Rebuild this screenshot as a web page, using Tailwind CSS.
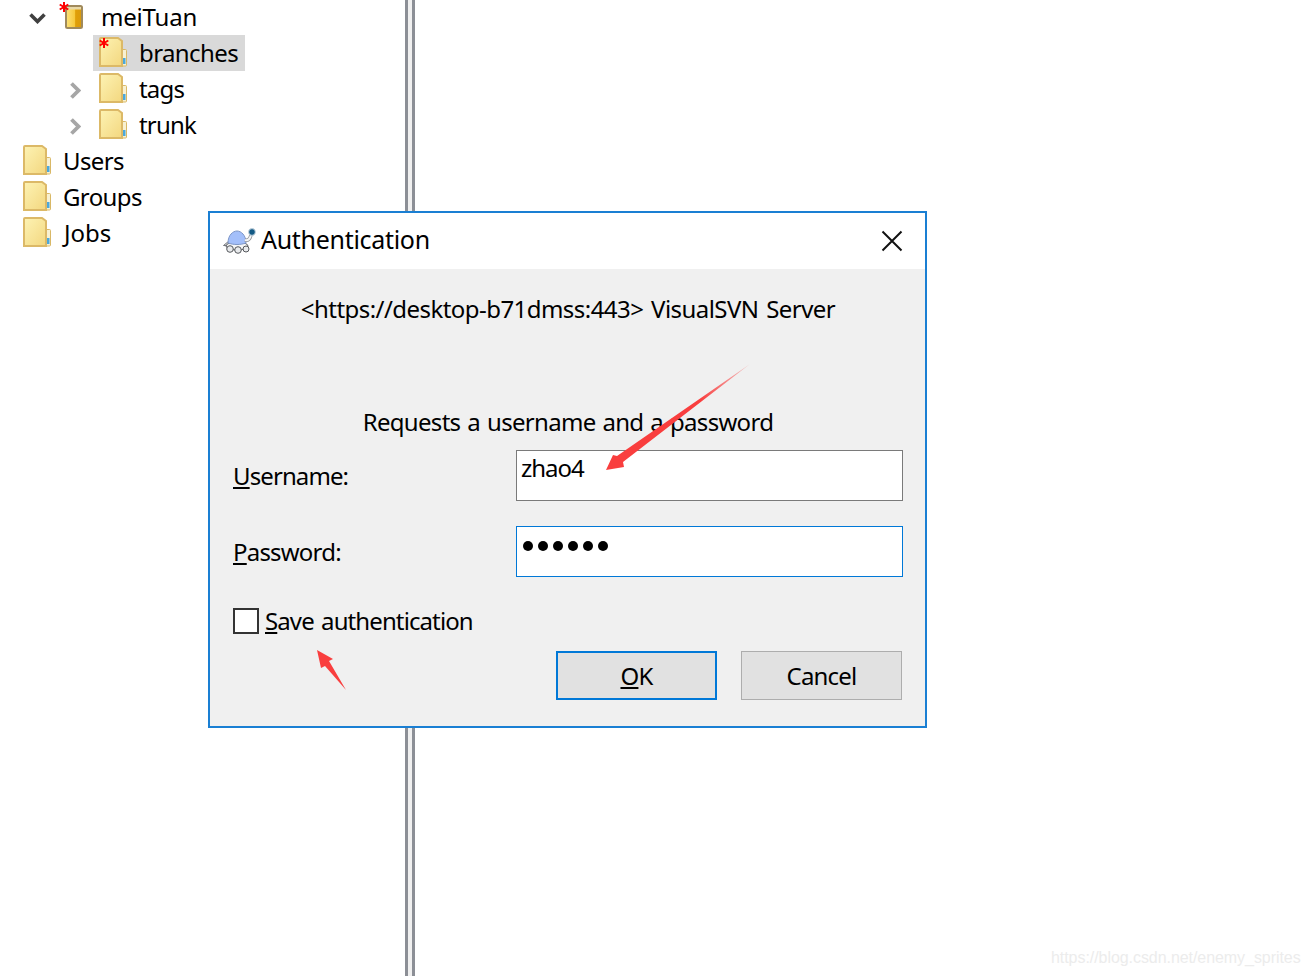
<!DOCTYPE html>
<html lang="en">
<head>
    <meta charset="UTF-8">
    <meta name="viewport" content="width=device-width, initial-scale=1.0">
    <title>Authentication</title>
    <script src="https://cdn.jsdelivr.net/npm/@tailwindcss/browser@4"></script>
</head>
<body class="bg-white text-black font-['Noto_Sans','Open_Sans',sans-serif] text-[24px] tracking-[-0.5px] overflow-hidden">

    <!-- shared icons -->
    <svg class="absolute w-0 h-0">
        <defs>
            <linearGradient id="folder-fill" x1="0" y1="0" x2="1" y2="1">
                <stop offset="0" stop-color="#fdf3b4"/>
                <stop offset="1" stop-color="#f3d77f"/>
            </linearGradient>
            <linearGradient id="repo-fill" x1="0" y1="0" x2="1" y2="0">
                <stop offset="0" stop-color="#fde27a"/>
                <stop offset="0.55" stop-color="#f7c93c"/>
                <stop offset="0.6" stop-color="#e09f08"/>
                <stop offset="1" stop-color="#d99a0c"/>
            </linearGradient>
            <linearGradient id="arrow-fade" gradientUnits="userSpaceOnUse" x1="750" y1="364" x2="700" y2="401">
                <stop offset="0" stop-color="#f93e3e" stop-opacity="0.25"/>
                <stop offset="1" stop-color="#f93e3e"/>
            </linearGradient>
            <symbol id="folder" viewBox="0 0 28 30">
                <path d="M22.5 12.5h4a1 1 0 0 1 1 1V28a1 1 0 0 1-1 1h-4z" fill="#f8f1d2" stroke="#d9b866"/>
                <rect x="24" y="21" width="2.5" height="6" fill="#4aa8dc"/>
                <path d="M1 2a1 1 0 0 1 1-1h17l4 3v25H1z" fill="url(#folder-fill)" stroke="#dcb967" stroke-width="2"/>
            </symbol>
            <symbol id="star" viewBox="0 0 10 10">
                <path d="M5 0v10M0.7 2.5l8.6 5M9.3 2.5l-8.6 5" stroke="#ff0000" stroke-width="2"/>
            </symbol>
        </defs>
    </svg>

    <!-- repository tree -->
    <div class="-mt-px w-[405px]">
        <div class="flex items-center h-9 pl-[29px]">
            <svg class="w-[17px] h-[11px] mr-[13px] mt-[3px]" viewBox="0 0 17 11" fill="none"><path d="M1.5 1.5l7 7 7-7" stroke="#404040" stroke-width="3.6"/></svg>
            <span class="relative w-[28px] h-[36px] flex items-center">
                <svg class="absolute left-0 top-[3px] w-[10px] h-[10px] z-10"><use href="#star"/></svg>
                <svg class="ml-[6px] w-[18px] h-[24px]" viewBox="0 0 18 24">
                    <rect x="1" y="1" width="16" height="22" rx="1.5" fill="url(#repo-fill)" stroke="#a08a5c" stroke-width="2"/>
                    <rect x="2" y="2" width="14" height="2.5" fill="#e9d9a8"/>
                </svg>
            </span>
            <span class="ml-[14px] tracking-[-0.2px]">meiTuan</span>
        </div>
        <div class="flex items-center h-9 pl-[93px]">
            <div class="flex items-center h-9 w-[152px] pl-[6px] bg-[#d9d9d9]">
                <span class="relative w-[28px] h-[30px] -mt-0.5">
                    <svg class="block w-[28px] h-[30px]"><use href="#folder"/></svg>
                    <svg class="absolute left-0 top-[1px] w-[10px] h-[10px]"><use href="#star"/></svg>
                </span>
                <span class="ml-[12px] tracking-[-0.6px]">branches</span>
            </div>
        </div>
        <div class="flex items-center h-9 pl-[70px]">
            <svg class="w-[11px] h-[17px] mr-[18px] mt-[2px]" viewBox="0 0 11 17" fill="none"><path d="M1.5 1.5l7 7-7 7" stroke="#a6a6a6" stroke-width="3.8"/></svg>
            <svg class="w-[28px] h-[30px] -mt-0.5"><use href="#folder"/></svg>
            <span class="ml-[12px] tracking-[-0.8px]">tags</span>
        </div>
        <div class="flex items-center h-9 pl-[70px]">
            <svg class="w-[11px] h-[17px] mr-[18px] mt-[2px]" viewBox="0 0 11 17" fill="none"><path d="M1.5 1.5l7 7-7 7" stroke="#a6a6a6" stroke-width="3.8"/></svg>
            <svg class="w-[28px] h-[30px] -mt-0.5"><use href="#folder"/></svg>
            <span class="ml-[12px] tracking-[-0.8px]">trunk</span>
        </div>
        <div class="flex items-center h-9 pl-[23px]">
            <svg class="w-[28px] h-[30px] -mt-0.5"><use href="#folder"/></svg>
            <span class="ml-[12px] tracking-[-0.6px]">Users</span>
        </div>
        <div class="flex items-center h-9 pl-[23px]">
            <svg class="w-[28px] h-[30px] -mt-0.5"><use href="#folder"/></svg>
            <span class="ml-[12px] tracking-[-0.6px]">Groups</span>
        </div>
        <div class="flex items-center h-9 pl-[23px]">
            <svg class="w-[28px] h-[30px] -mt-0.5"><use href="#folder"/></svg>
            <span class="ml-[13px] tracking-normal">Jobs</span>
        </div>
    </div>

    <!-- splitter -->
    <div class="absolute left-[405px] top-0 w-[10px] h-full bg-[#f0f0f0] border-x-[3px] border-[#8c8f96]"></div>

    <!-- dialog -->
    <div class="absolute left-[208px] top-[211px] w-[719px] h-[517px] border-2 border-[#1a7fd3] bg-[#f0f0f0]">
        <div class="flex items-center h-[56px] bg-white pl-[13px] pr-[22px] -mb-px">
            <svg class="w-[33px] h-[26px]" viewBox="0 0 33 26">
                <path d="M0.5 17.5L6 13l2 5z" fill="#e3e5e8" stroke="#6f7278"/>
                <ellipse cx="14" cy="18" rx="11" ry="4" fill="#f4f5f6" stroke="#55585c"/>
                <circle cx="7" cy="21" r="3.3" fill="#e8eaec" stroke="#55585c"/>
                <circle cx="15" cy="22" r="3.3" fill="#e8eaec" stroke="#55585c"/>
                <circle cx="23" cy="21" r="3" fill="#e8eaec" stroke="#55585c"/>
                <path d="M5 15C5 7 10 3 14 3s9 4 9 12c-6 2-12 2-18 0z" fill="#a3bffa" stroke="#7e97c8"/>
                <path d="M22 12c3 1 5-1 6-5" fill="none" stroke="#8b8f95" stroke-width="3.5"/>
                <path d="M22 12c3 1 5-1 6-5" fill="none" stroke="#f4f5f6" stroke-width="2"/>
                <circle cx="29" cy="4" r="3.4" fill="#135a85" stroke="#c7d5df"/>
            </svg>
            <span class="ml-[5px] -mt-[2px] text-[25px] tracking-[-0.3px]">Authentication</span>
            <svg class="ml-auto w-[22px] h-[22px]" viewBox="0 0 22 22" fill="none"><path d="M1.5 1.5l19 19M20.5 1.5l-19 19" stroke="#111" stroke-width="2"/></svg>
        </div>
        <div class="flex flex-col pl-[23px] pr-[22px]">
            <p class="mt-[23px] h-9 leading-9 text-center tracking-[-0.55px] [word-spacing:2px]">&lt;https://desktop-b71dmss:443&gt; VisualSVN Server</p>
            <p class="mt-[77px] h-9 leading-9 text-center tracking-[-0.7px] [word-spacing:1.4px]">Requests a username and a password</p>
            <div class="mt-[10px] flex items-center">
                <label class="w-[283px] tracking-[-0.9px]"><u class="underline">U</u>sername:</label>
                <div class="flex-1 h-[51px] border border-[#7a7a7a] bg-white px-1 leading-[34px] tracking-[-1px]">zhao4</div>
            </div>
            <div class="mt-[25px] flex items-center">
                <label class="w-[283px] tracking-[-0.8px]"><u class="underline">P</u>assword:</label>
                <div class="flex-1 h-[51px] border border-[#0078d7] bg-white pl-[6px] pt-[14px]">
                    <div class="flex gap-[5px]">
                        <span class="size-[10px] rounded-full bg-black"></span>
                        <span class="size-[10px] rounded-full bg-black"></span>
                        <span class="size-[10px] rounded-full bg-black"></span>
                        <span class="size-[10px] rounded-full bg-black"></span>
                        <span class="size-[10px] rounded-full bg-black"></span>
                        <span class="size-[10px] rounded-full bg-black"></span>
                    </div>
                </div>
            </div>
            <div class="mt-[31px] flex items-center h-[26px]">
                <span class="size-[26px] border-2 border-[#333] bg-white"></span>
                <span class="ml-[6px] tracking-[-0.9px] [word-spacing:2px]"><u class="underline">S</u>ave authentication</span>
            </div>
            <div class="mt-[17px] mr-px flex justify-end gap-6">
                <button class="w-[161px] h-[49px] border-2 border-[#0078d7] bg-[#e1e1e1] tracking-[-0.8px]"><u class="underline">O</u>K</button>
                <button class="w-[161px] h-[49px] border border-[#adadad] bg-[#e1e1e1] tracking-[-0.8px]">Cancel</button>
            </div>
        </div>
    </div>

    <!-- red annotation arrows -->
    <svg class="absolute left-0 top-0 w-[1309px] h-[976px] pointer-events-none" viewBox="0 0 1309 976">
        <path d="M750 364L623 462l1 5-18 3 7-15 4 1z" fill="url(#arrow-fade)"/>
        <path d="M317 650l16 9-4 2 17 29-21-24-4 2z" fill="#f93e3e"/>
    </svg>

    <!-- watermark -->
    <span class="absolute left-[1051px] top-[946px] text-[16px] tracking-[-0.06px] font-['Liberation_Sans',sans-serif] text-[#ececec]">https://blog.csdn.net/enemy_sprites</span>
</body>
</html>
